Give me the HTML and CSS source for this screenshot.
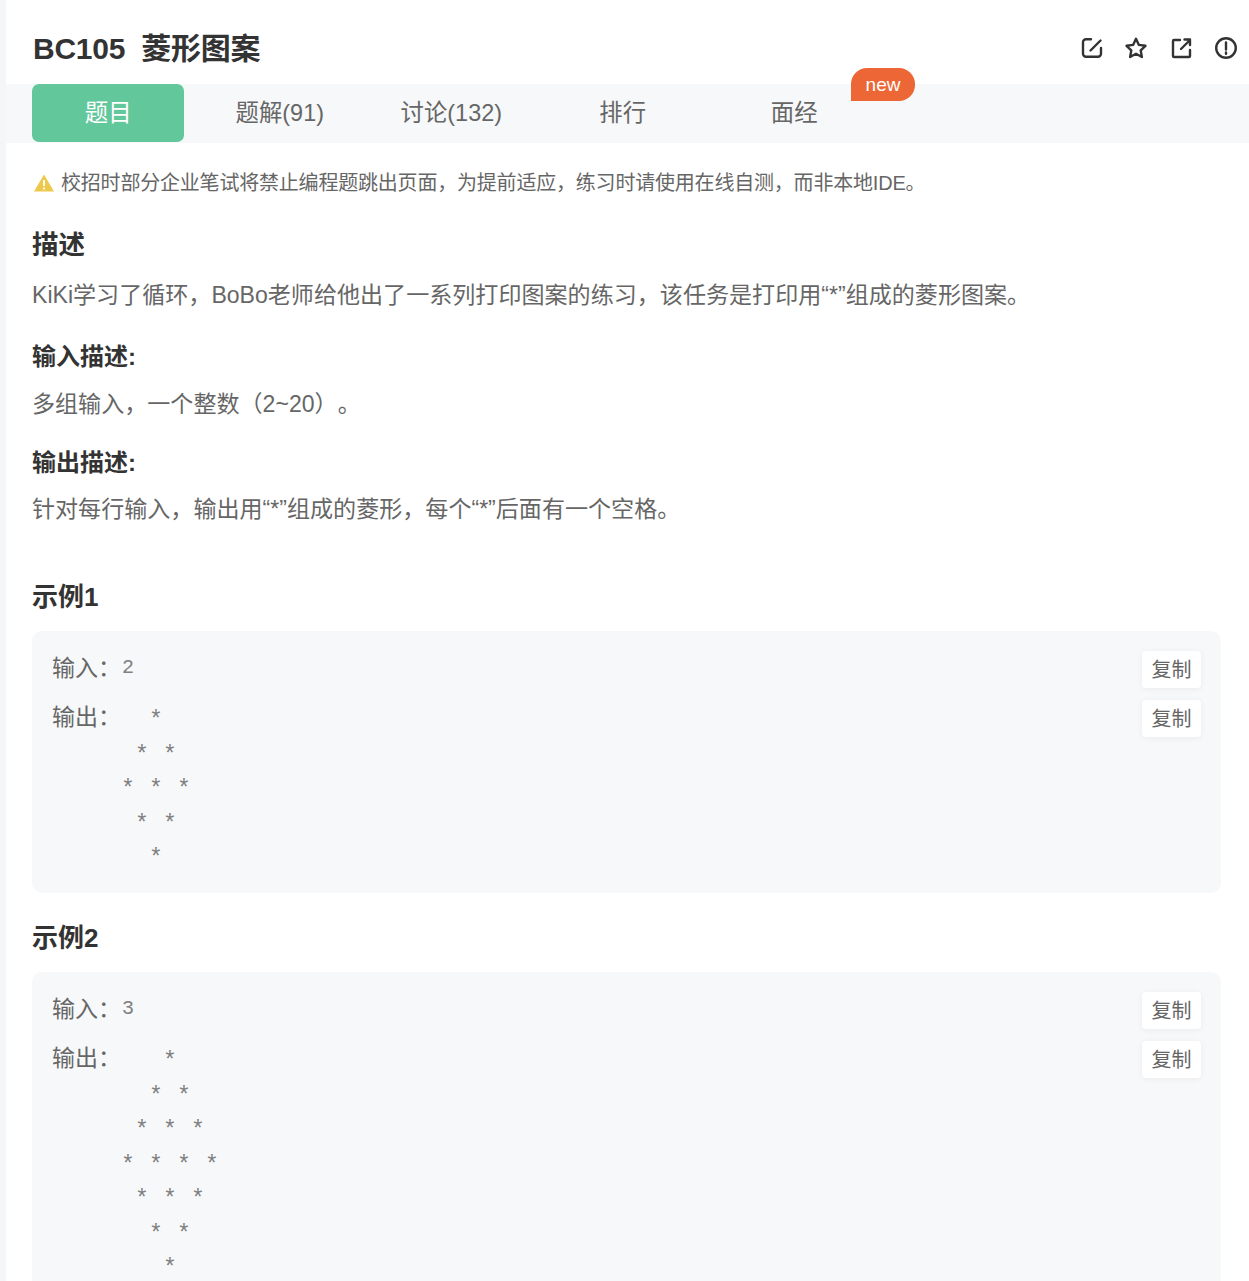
FILE: index.html
```html
<!DOCTYPE html>
<html lang="zh-CN">
<head>
<meta charset="utf-8">
<title>BC105 菱形图案</title>
<link rel="stylesheet" href="styles.css">
</head>
<body>
<main class="page">
  <header class="head">
    <h1 class="title">BC105&nbsp;&nbsp;菱形图案</h1>
    <div class="actions">
      <svg class="icon" viewBox="0 0 24 24"><path d="M12 3.200H7a3 3 0 0 0-3 3v11.600a3 3 0 0 0 3 3h12a3 3 0 0 0 3-3V12M11.500 14.500 21.500 4.500"/></svg>
      <svg class="icon" viewBox="0 0 24 24"><path d="M12 2.800l2.900 6.100 6.600.9-4.800 4.600 1.200 6.600-5.900-3.200-5.900 3.200 1.200-6.600-4.800-4.600 6.600-.9z"/></svg>
      <svg class="icon" viewBox="0 0 24 24"><path d="M11 4H5a1 1 0 0 0-1 1v15a1 1 0 0 0 1 1h15a1 1 0 0 0 1-1v-6M12 13 21 4M15.500 3.500h5.500v5.500"/></svg>
      <svg class="icon" viewBox="0 0 24 24"><circle cx="12" cy="12" r="9.800"/><path d="M12 6.500v7M12 16.500v1.200"/></svg>
    </div>
  </header>
  <nav class="tabs">
    <a class="tab active">题目</a>
    <a class="tab">题解(91)</a>
    <a class="tab">讨论(132)</a>
    <a class="tab">排行</a>
    <a class="tab">面经<span class="badge">new</span></a>
  </nav>
  <section class="content">
    <p class="notice">
      <svg class="warn" viewBox="0 0 20 18"><path d="M10 0.500 20 17.500H0z" fill="#ecc94b"/><path d="M10 6v6M10 13.500v2" stroke="#fff" stroke-width="1.800"/></svg>校招时部分企业笔试将禁止编程题跳出页面，为提前适应，练习时请使用在线自测，而非本地IDE。
    </p>
    <h2 class="h-main">描述</h2>
    <p class="text">KiKi学习了循环，BoBo老师给他出了一系列打印图案的练习，该任务是打印用“*”组成的菱形图案。</p>
    <h3 class="h-sub">输入描述:</h3>
    <p class="text tight">多组输入，一个整数（2~20）。</p>
    <h3 class="h-sub">输出描述:</h3>
    <p class="text tighter">针对每行输入，输出用“*”组成的菱形，每个“*”后面有一个空格。</p>

    <h2 class="h-example first">示例1</h2>
    <div class="box">
      <div class="row"><span class="label">输入：</span><pre class="code">2</pre><button class="copy">复制</button></div>
      <div class="row"><span class="label">输出：</span><pre class="code stars">  * 
 * * 
* * * 
 * * 
  * </pre><button class="copy">复制</button></div>
    </div>

    <h2 class="h-example">示例2</h2>
    <div class="box">
      <div class="row"><span class="label">输入：</span><pre class="code">3</pre><button class="copy">复制</button></div>
      <div class="row"><span class="label">输出：</span><pre class="code stars">   * 
  * * 
 * * * 
* * * * 
 * * * 
  * * 
   * </pre><button class="copy">复制</button></div>
    </div>
  </section>
</main>
</body>
</html>
```
FILE: styles.css
```css
html, body {
  margin: 0;
  height: 100%;
  overflow: hidden;
  background: #fff;
}
body {
  font-family: "Liberation Sans", "Noto Sans CJK SC", sans-serif;
  color: #666;
  text-spacing-trim: space-all;
}
.page {
  border-left: 6px solid #f5f6f8;
}
.head {
  height: 84px;
  display: flex;
  align-items: center;
  justify-content: space-between;
  padding: 8px 11px 0 27px;
  box-sizing: border-box;
}
.title {
  margin: 0;
  font-size: 30px;
  font-weight: 700;
  color: #333;
  letter-spacing: -0.25px;
}
.actions {
  display: flex;
  gap: 21px;
  margin-top: 4px;
}
.icon {
  width: 24px;
  height: 24px;
  fill: none;
  stroke: #333;
  stroke-width: 2.4;
  stroke-linejoin: round;
  stroke-linecap: round;
}
.tabs {
  display: flex;
  gap: 20px;
  height: 59px;
  padding-left: 26px;
  background: #f7f8fa;
}
.tab {
  position: relative;
  box-sizing: border-box;
  width: 151.5px;
  height: 58px;
  padding-left: 1px;
  line-height: 59px;
  text-align: center;
  font-size: 23.4px;
  color: #666;
}
.tab.active {
  background: #63c79c;
  color: #fff;
  border-radius: 7px;
}
.badge {
  position: absolute;
  left: 133px;
  top: -16px;
  width: 64px;
  height: 33px;
  line-height: 33px;
  font-size: 19px;
  color: #fff;
  background: #ec6735;
  border-radius: 16px 16px 16px 0;
}
.content {
  padding: 0 28px 0 26px;
}
.notice {
  margin: 27px 0 0;
  height: 26px;
  line-height: 26px;
  font-size: 20px;
  letter-spacing: -0.2px;
  display: flex;
  align-items: center;
  color: #666;
}
.warn {
  width: 20px;
  height: 18px;
  margin: 0 7px 0 2px;
  flex: none;
}
.h-main {
  margin: 30px 0 0;
  font-size: 26.5px;
  line-height: 38px;
  color: #333;
}
.text {
  margin: 12px 0 0;
  font-size: 23.07px;
  line-height: 38px;
  color: #666;
}
.text.tight {
  margin-top: 10px;
}
.text.tighter {
  margin-top: 9px;
}
.h-sub {
  margin: 25px 0 0;
  font-size: 24px;
  line-height: 36px;
  color: #333;
}
.text.tight + .h-sub {
  margin-top: 22px;
}
.h-example {
  margin: 26px 0 0;
  font-size: 26px;
  line-height: 38px;
  color: #333;
}
.h-example.first {
  margin-top: 50px;
}
.box {
  margin-top: 15px;
  padding: 20px 20px 4.500px;
  background: #f7f8fa;
  border-radius: 10px;
}
.row {
  display: flex;
  align-items: flex-start;
  margin-bottom: 12px;
}
.label {
  flex: none;
  width: 70px;
  font-size: 23px;
  line-height: 34px;
  color: #666;
}
.code {
  flex: 1;
  margin: 0;
  font-family: "Liberation Mono", monospace;
  font-size: 20px;
  letter-spacing: 2px;
  line-height: 34.5px;
  color: #808080;
}
.code.stars {
  margin-left: -1px;
  padding-top: 4px;
  font-size: 23px;
  letter-spacing: 0.2px;
}
.copy {
  flex: none;
  width: 59px;
  height: 37px;
  padding: 0 0 2px;
  border: 0;
  border-radius: 4px;
  background: #fff;
  box-shadow: 0 1px 6px rgba(0, 0, 0, 0.06);
  font: 20px "Liberation Sans", "Noto Sans CJK SC", sans-serif;
  color: #666;
}
```
